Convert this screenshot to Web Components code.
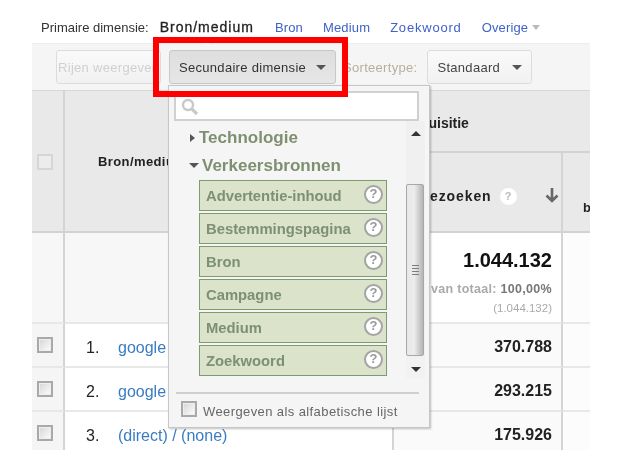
<!DOCTYPE html>
<html>
<head>
<meta charset="utf-8">
<style>
  html, body { margin: 0; background: #fff; }
  body { font-family: "Liberation Sans", Arial, sans-serif; width: 621px; height: 469px; overflow: hidden; }
</style>
</head>
<body>
<report-page>
  <dim-bar slot="bar"></dim-bar>
  <report-toolbar slot="toolbar"></report-toolbar>
  <report-table slot="table"></report-table>
  <dim-menu slot="menu">
    <menu-item>Advertentie-inhoud</menu-item>
    <menu-item>Bestemmingspagina</menu-item>
    <menu-item>Bron</menu-item>
    <menu-item>Campagne</menu-item>
    <menu-item>Medium</menu-item>
    <menu-item>Zoekwoord</menu-item>
  </dim-menu>
</report-page>

<script>
const CHECKBOX = `<span class="check"></span>`;
const CHECK_STYLE = `
  .check {
    display: block; box-sizing: border-box; width: 16px; height: 16px;
    border: 2px solid #a9a9a9;
    background: linear-gradient(135deg, #d4d4d4, #f6f6f6 80%);
    box-shadow: inset 0 0 0 1px #eee;
  }
  .check.faint { border-color: #d6d6d6; background: #ececec; box-shadow: none; }
`;

class ReportPage extends HTMLElement {
  constructor() {
    super();
    this.attachShadow({ mode: "open" }).innerHTML = `
      <style>
        :host { display: block; position: relative; width: 621px; height: 469px; filter: blur(0.35px); }
        .content { width: 558px; margin-left: 32px; padding-top: 17px; }
        .menu { position: absolute; left: 168px; top: 85px; }
        .marker {
          position: absolute; left: 153px; top: 37px; width: 195px; height: 60px;
          box-sizing: border-box; border: 6px solid #f00;
        }
      </style>
      <div class="content">
        <slot name="bar"></slot>
        <slot name="toolbar"></slot>
        <slot name="table"></slot>
      </div>
      <div class="menu"><slot name="menu"></slot></div>
      <div class="marker"></div>
    `;
  }
}

class DimBar extends HTMLElement {
  constructor() {
    super();
    this.attachShadow({ mode: "open" }).innerHTML = `
      <style>
        :host { display: flex; align-items: center; box-sizing: border-box; height: 26px; padding: 0 0 6px 9px; font-size: 13px; color: #333; white-space: nowrap; }
        b { font-weight: normal; font-size: 14px; letter-spacing: 1px; color: #222; margin-left: 11px; margin-right: 21px; -webkit-text-stroke: 0.3px #222; }
        a { color: #3f63c8; margin-right: 20px; letter-spacing: 0.15px; }
        a.wide { letter-spacing: 0.8px; }
        i { display: inline-block; margin-left: 4px; border: 4px solid transparent; border-top: 5px solid #bbb; border-bottom: 0; vertical-align: 2px; }
      </style>
      <span>Primaire dimensie:</span>
      <b>Bron/medium</b>
      <a>Bron</a><a>Medium</a><a class="wide">Zoekwoord</a><a>Overige<i></i></a>
    `;
  }
}

class ReportToolbar extends HTMLElement {
  constructor() {
    super();
    this.attachShadow({ mode: "open" }).innerHTML = `
      <style>
        :host {
          display: flex; align-items: center; box-sizing: border-box; height: 48px; position: relative;
          padding-left: 24px; background: #f5f5f5; border-top: 1px solid #ededed; border-bottom: 1px solid #d8d8d8;
          font-size: 13px; letter-spacing: 0.3px; white-space: nowrap;
        }
        :host::before {
          content: ""; position: absolute; left: 171px; top: -4px; width: 6px; height: 6px;
          background: #f5f5f5; border: 1px solid #e4e4e4; border-width: 1px 0 0 1px; transform: rotate(45deg);
        }
        .btn {
          box-sizing: border-box; height: 34px; display: flex; align-items: center; justify-content: space-between;
          border: 1px solid #dcdcdc; border-radius: 3px; padding: 0 9px;
          background: linear-gradient(#fafafa, #f1f1f1); color: #444;
        }
        .off { width: 105px; color: #d0d0d0; padding: 0 0 0 1px; overflow: hidden; margin-right: 8px; }
        .sec { width: 167px; background: linear-gradient(#dedede, #e6e6e6); border-color: #c8c8c8; color: #333; }
        .std { width: 105px; }
        .lbl { color: #b5b09c; margin: 0 10px 0 7px; }
        i { border: 5px solid transparent; border-top: 5px solid #555; border-bottom: 0; }
      </style>
      <span class="btn off">Rijen weergeven</span>
      <span class="btn sec">Secundaire dimensie<i></i></span>
      <span class="lbl">Sorteertype:</span>
      <span class="btn std">Standaard<i></i></span>
    `;
  }
}

class ReportTable extends HTMLElement {
  constructor() {
    super();
    const rows = [
      ["1.", "google", "370.788"],
      ["2.", "google", "293.215"],
      ["3.", "(direct) / (none)", "175.926"],
    ];
    this.attachShadow({ mode: "open" }).innerHTML = `
      <style>
        :host {
          display: grid; grid-template-columns: 33px 329px 169px 27px;
          grid-template-rows: 62px 80px 91px 44px 44px 40px;
          font-size: 13px; color: #222; overflow: hidden; height: 359px;
        }
        .cell { box-sizing: border-box; border-right: 2px solid #d4d4d4; border-bottom: 2px solid #e8e8e8; }
        .gray { background: #e9e9e9; border-bottom-color: #d2d2d2; }
        .side { background: #f5f5f5; display: flex; justify-content: flex-start; padding: 13px 0 0 5px; }
        .head { font-weight: bold; }
        .main { grid-row: 1 / span 2; padding: 63px 0 0 33px; letter-spacing: 0.4px; }
        .acq { grid-column: 3 / span 2; padding: 24px 0 0 8px; font-size: 14px; border-right: 0; }
        .vis { padding: 35px 2px 0 25px; display: flex; align-items: flex-start; font-size: 14px; letter-spacing: 0.9px; white-space: nowrap; gap: 8px; }
        .tip { display: inline-block; box-sizing: border-box; width: 17px; height: 17px; border-radius: 50%; background: #fff; color: #bbb; font-size: 11px; line-height: 17px; text-align: center; letter-spacing: 0; font-weight: bold; }
        .arrow { margin: -1px 0 0 auto; }
        .last { padding: 47px 0 0 20px; border-right: 0; overflow: hidden; }
        .tot { text-align: right; padding: 16px 9px 0 0; color: #aaa; font-size: 12.5px; font-weight: bold; letter-spacing: 0.3px; white-space: nowrap; background: #fff; }
        .tot strong { display: block; font-size: 20px; font-weight: bold; letter-spacing: 0; color: #111; margin-bottom: 11px; line-height: 22px; }
        .tot b { color: #777; }
        .tot small { display: block; font-size: 11.5px; font-weight: normal; letter-spacing: 0; color: #aaa; margin-top: 6px; }
        .side-total { background: #f7f7f7; }
        .dim { display: flex; align-items: flex-start; font-size: 16px; line-height: 18px; color: #222; padding-top: 15px; white-space: nowrap; }
        .dim span { width: 21px; margin-left: 21px; margin-right: 11px; text-align: left; }
        .dim a { color: #3a7cc0; }
        .num { text-align: right; padding: 14px 9px 0 0; font-weight: bold; font-size: 16px; line-height: 18px; background: #fafafa; }
        .rest { background: #fcfcfc; border-right: 0; }
        ${CHECK_STYLE}
      </style>
      <div class="cell gray side" style="grid-row: 1 / span 2; background:#e9e9e9; padding-top: 63px"><span class="check faint"></span></div>
      <div class="cell gray head main">Bron/medium</div>
      <div class="cell gray head acq">Acquisitie</div>
      <div class="cell gray head vis">Bezoeken<span class="tip">?</span>
        <svg class="arrow" width="14" height="16" viewBox="0 0 14 16"><path d="M7 1v13M1.5 8.5L7 14l5.5-5.5" fill="none" stroke="#666" stroke-width="2.6"/></svg>
      </div>
      <div class="cell gray head last">b</div>
      <div class="cell side side-total"></div>
      <div class="cell side-total"></div>
      <div class="cell tot"><strong>1.044.132</strong>van totaal: <b>100,00%</b><small>(1.044.132)</small></div>
      <div class="cell rest"></div>
      ${rows.map(([n, label, value]) => `
        <div class="cell side">${CHECKBOX}</div>
        <div class="cell dim"><span>${n}</span><a>${label}</a></div>
        <div class="cell num">${value}</div>
        <div class="cell rest"></div>
      `).join("")}
    `;
  }
}

class DimMenu extends HTMLElement {
  constructor() {
    super();
    this.attachShadow({ mode: "open" }).innerHTML = `
      <style>
        :host {
          display: block; box-sizing: border-box; width: 262px; height: 343px; padding: 5px 0 0 5px;
          background: #f5f5f5; border: 1px solid #c6c6c6; box-shadow: 1px 1px 2px rgba(0,0,0,.25);
        }
        .search { box-sizing: border-box; width: 245px; height: 30px; background: #fff; border: 2px solid #d0d0d0; padding: 5px 0 0 5px; }
        .search svg { display: block; }
        .body { display: flex; height: 257px; }
        .list { width: 232px; padding-top: 5px; }
        .group { display: flex; align-items: center; height: 23px; margin-left: 15px; font-size: 17px; font-weight: bold; color: #7d9070; }
        .group + .group { margin-top: 5px; }
        .group i { border: 4px solid transparent; }
        .closed i { border-left: 5px solid #555; border-right: 0; margin-left: 1px; margin-right: 4px; }
        .open i { border-top: 5px solid #555; border-bottom: 0; margin-right: 3px; border-left-width: 5px; border-right-width: 5px; }
        .items { display: flex; flex-direction: column; gap: 2px; margin: 3px 0 0 25px; }
        .bar { width: 19px; display: flex; flex-direction: column; background: #f0f0f0; }
        .end { height: 30px; display: flex; justify-content: center; padding-top: 10px; box-sizing: border-box; }
        .end i { width: 0; height: 0; border: 5px solid transparent; }
        .up i { border-bottom: 5px solid #333; border-top: 0; }
        .down { height: 20px; padding-top: 9px; background: #f2f2f2; }
        .down i { border-top: 5px solid #333; border-bottom: 0; }
        .thumb {
          margin: 33px 1px 0 0; box-sizing: border-box; height: 172px; flex: none;
          border: 1px solid #a8a8a8; border-radius: 2px; display: flex; align-items: center; justify-content: center;
          background: linear-gradient(90deg, #e8e8e8, #ececec 45%, #b4b4b4);
        }
        .grip { width: 7px; height: 10px; background: repeating-linear-gradient(#7d7d7d 0 1px, transparent 1px 3px); }
        .foot { margin: 14px 0 0 2px; width: 243px; box-sizing: border-box; border-top: 2px solid #cfcfcf; padding: 7px 0 0 5px; display: flex; align-items: flex-end; gap: 6px; font-size: 13px; line-height: 15px; letter-spacing: 0.4px; color: #666; white-space: nowrap; }
        .foot span:last-child { margin-bottom: -2px; }
        ${CHECK_STYLE}
      </style>
      <div class="search">
        <svg width="18" height="18" viewBox="0 0 18 18"><circle cx="7" cy="7" r="5" fill="none" stroke="#c9c9c9" stroke-width="2.4"/><path d="M10.8 10.8l5.2 5.2" stroke="#c9c9c9" stroke-width="3.2"/></svg>
      </div>
      <div class="body">
        <div class="list">
          <div class="group closed"><i></i>Technologie</div>
          <div class="group open"><i></i>Verkeersbronnen</div>
          <div class="items"><slot></slot></div>
        </div>
        <div class="bar">
          <div class="end up"><i></i></div>
          <div class="thumb"><span class="grip"></span></div>
          <div style="flex:1"></div>
          <div class="end down"><i></i></div>
        </div>
      </div>
      <div class="foot">${CHECKBOX}<span>Weergeven als alfabetische lijst</span></div>
    `;
  }
}

class MenuItem extends HTMLElement {
  constructor() {
    super();
    this.attachShadow({ mode: "open" }).innerHTML = `
      <style>
        :host {
          display: flex; align-items: center; justify-content: space-between; box-sizing: border-box;
          width: 188px; height: 31px; padding: 1px 3px 0 6px;
          background: #dbe3cb; border: 1px solid #7f9a72;
          font-size: 14.8px; font-weight: bold; color: #7d9070; white-space: nowrap;
        }
        .q {
          box-sizing: border-box; width: 19px; height: 19px; margin-top: -4px; border: 2.5px solid #a4a4a4; border-radius: 50%;
          background: #fff; color: #999; font-size: 13px; line-height: 14px; text-align: center;
        }
      </style>
      <slot></slot><span class="q">?</span>
    `;
  }
}

customElements.define("report-page", ReportPage);
customElements.define("dim-bar", DimBar);
customElements.define("report-toolbar", ReportToolbar);
customElements.define("report-table", ReportTable);
customElements.define("dim-menu", DimMenu);
customElements.define("menu-item", MenuItem);
</script>
</body>
</html>
